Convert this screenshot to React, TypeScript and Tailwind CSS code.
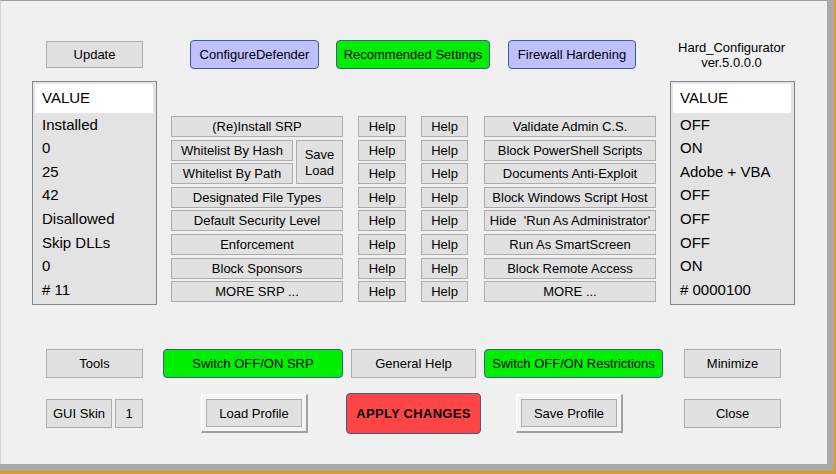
import type { ReactNode } from "react";

// flat WinForms-style push button
function Btn({ children, className = "" }: { children: ReactNode; className?: string }) {
  return (
    <div
      className={`flex items-center justify-center bg-[#e1e1e1] border border-[#adadad] text-black text-[13px] whitespace-nowrap ${className}`}
    >
      {children}
    </div>
  );
}

// coloured rounded button (blue / green / red)
function ColorBtn({ children, className = "" }: { children: ReactNode; className?: string }) {
  return (
    <div
      className={`flex items-center justify-center rounded-[4px] border border-[#3b5f8c] text-black text-[13px] leading-none whitespace-nowrap ${className}`}
    >
      {children}
    </div>
  );
}

// raised 3D button used for profile load/save
function RaisedBtn({ children, className = "" }: { children: ReactNode; className?: string }) {
  return (
    <div
      className={`flex bg-[#f4f4f4] border-t border-l border-t-white border-l-white border-r-2 border-b-2 border-r-[#a0a0a0] border-b-[#a0a0a0] p-[4px] ${className}`}
    >
      <Btn className="flex-1 leading-none">{children}</Btn>
    </div>
  );
}

function ValueList({ items }: { items: string[] }) {
  return (
    <div className="w-[125px] h-[224px] border border-[#828790] bg-[#e3e3e3] pt-[2px] pl-[2px] text-[15px] text-black">
      <div className="w-[118px] h-[29px] bg-white flex items-center pl-[7px]">VALUE</div>
      {items.map((v, i) => (
        <div key={i} className="h-[23.6px] flex items-center pl-[7px] whitespace-nowrap">
          {v}
        </div>
      ))}
    </div>
  );
}

const leftValues = ["Installed", "0", "25", "42", "Disallowed", "Skip DLLs", "0", "# 11"];
const rightValues = ["OFF", "ON", "Adobe + VBA", "OFF", "OFF", "OFF", "ON", "# 0000100"];

const srpRest = ["Designated File Types", "Default Security Level", "Enforcement", "Block Sponsors", "MORE SRP ..."];
const restrictions = [
  "Validate Admin C.S.",
  "Block PowerShell Scripts",
  "Documents Anti-Exploit",
  "Block Windows Script Host",
  "Hide  'Run As Administrator'",
  "Run As SmartScreen",
  "Block Remote Access",
  "MORE ...",
];

export default function App() {
  const helps = Array.from({ length: 8 });

  return (
    <div
      className="w-[836px] h-[474px] bg-[#e8981e] pr-[2px] pb-[3px] overflow-hidden"
      style={{ fontFamily: '"Liberation Sans", Arial, sans-serif' }}
    >
      <div className="w-[834px] h-[471px] bg-[#a9a9a9] pr-[7px] pb-[7px]">
        <div className="w-[827px] h-[464px] bg-[#f0f0f0] border-t border-l border-t-[#a0a0a0] border-l-[#d4d4d4] flex flex-col">
          {/* top row */}
          <div className="flex items-start mt-[39px] h-[31px]">
            <Btn className="ml-[45px] w-[97px] h-[27px] mt-[1px] leading-none">Update</Btn>
            <ColorBtn className="ml-[47px] w-[129px] h-[29px] bg-[#c0c0ff]">ConfigureDefender</ColorBtn>
            <ColorBtn className="ml-[17px] w-[154px] h-[29px] bg-[#00ee00]">Recommended Settings</ColorBtn>
            <ColorBtn className="ml-[18px] w-[128px] h-[29px] bg-[#c0c0ff]">Firewall Hardening</ColorBtn>
            <div className="ml-[33px] w-[125px] text-center text-[13px] leading-[15px] text-black">
              <div>Hard_Configurator</div>
              <div>ver.5.0.0.0</div>
            </div>
          </div>

          {/* value lists and option buttons */}
          <div className="flex items-start mt-[10px]">
            <div className="ml-[31px]">
              <ValueList items={leftValues} />
            </div>

            <div className="flex ml-[14px] mt-[35px]">
              <div className="grid w-[172px] grid-cols-[122px_47px] grid-rows-[repeat(8,21px)] gap-x-[3px] gap-y-[2.6px]">
                <Btn className="col-span-2 leading-none">(Re)Install SRP</Btn>
                <Btn className="leading-none">Whitelist By Hash</Btn>
                <Btn className="row-span-2 flex-col leading-[16px] pt-[2px]">
                  <span>Save</span>
                  <span>Load</span>
                </Btn>
                <Btn className="leading-none">Whitelist By Path</Btn>
                {srpRest.map((t) => (
                  <Btn key={t} className="col-span-2 leading-none">
                    {t}
                  </Btn>
                ))}
              </div>

              <div className="flex flex-col gap-[2.6px] ml-[15px] w-[48px]">
                {helps.map((_, i) => (
                  <Btn key={i} className="h-[21px] leading-none">
                    Help
                  </Btn>
                ))}
              </div>

              <div className="flex flex-col gap-[2.6px] ml-[15px] w-[47px]">
                {helps.map((_, i) => (
                  <Btn key={i} className="h-[21px] leading-none">
                    Help
                  </Btn>
                ))}
              </div>

              <div className="flex flex-col gap-[2.6px] ml-[16px] w-[172px]">
                {restrictions.map((t) => (
                  <Btn key={t} className="h-[21px] leading-none whitespace-pre">
                    {t}
                  </Btn>
                ))}
              </div>
            </div>

            <div className="ml-[14px]">
              <ValueList items={rightValues} />
            </div>
          </div>

          {/* bottom row 1 */}
          <div className="flex mt-[44px] h-[29px]">
            <Btn className="ml-[45px] w-[97px] leading-none">Tools</Btn>
            <ColorBtn className="ml-[20px] w-[180px] bg-[#00ee00]">Switch OFF/ON SRP</ColorBtn>
            <Btn className="ml-[8px] w-[125px] leading-none">General Help</Btn>
            <ColorBtn className="ml-[8px] w-[179px] bg-[#00ee00]">Switch OFF/ON Restrictions</ColorBtn>
            <Btn className="ml-[21px] w-[97px] leading-none">Minimize</Btn>
          </div>

          {/* bottom row 2 */}
          <div className="flex items-center mt-[15px] h-[41px]">
            <Btn className="ml-[45px] w-[66px] h-[29px] leading-none">GUI Skin</Btn>
            <Btn className="ml-[3px] w-[28px] h-[29px] leading-none">1</Btn>
            <RaisedBtn className="ml-[58px] w-[107px] h-[39px]">Load Profile</RaisedBtn>
            <ColorBtn className="ml-[38px] w-[135px] h-[41px] bg-[#ff4545] font-bold text-[#1a0000] tracking-[0.3px]">
              APPLY CHANGES
            </ColorBtn>
            <RaisedBtn className="ml-[35px] w-[107px] h-[39px]">Save Profile</RaisedBtn>
            <Btn className="ml-[61px] w-[97px] h-[29px] leading-none">Close</Btn>
          </div>
        </div>
      </div>
    </div>
  );
}
